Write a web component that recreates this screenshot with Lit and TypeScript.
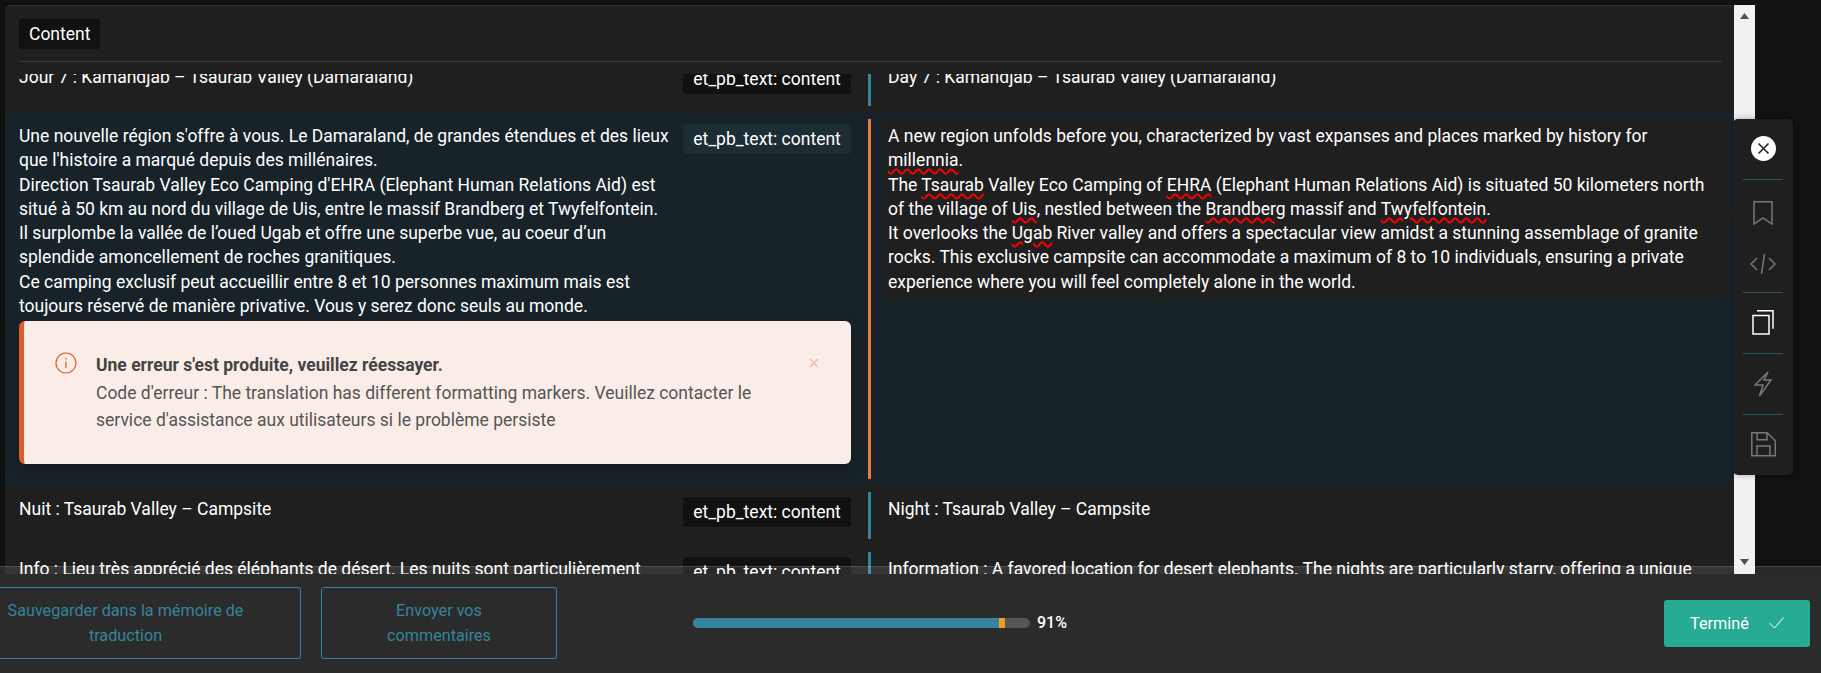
import { LitElement, html, css } from "lit";
import { customElement } from "lit/decorators.js";

const sp = (t: string) => html`<span class="sp">${t}</span>`;

@customElement("app-root")
export class AppRoot extends LitElement {
  static styles = css`
    :host { display: block; width: 1821px; height: 673px; background: #111; overflow: hidden; font-family: Roboto, "Liberation Sans", sans-serif; font-size: 17.5px; color: #fff; }
    .page { display: flex; flex-direction: column; height: 673px; padding-top: 5px; box-sizing: border-box; }
    .main { display: flex; height: 569px; flex: none; padding-left: 5px; position: relative; }
    .panel { width: 1729px; background: #1f1f1f; border-radius: 5px 5px 0 0; border-top: 1px solid #333; box-sizing: border-box; display: flex; flex-direction: column; overflow: hidden; }
    .head { flex: none; height: 56px; margin: 0 12px 0 14px; border-bottom: 1px solid #3a3a3a; padding-top: 13px; box-sizing: border-box; }
    .chip { display: inline-block; height: 30px; line-height: 30px; padding: 0 10px; background: #111; border-radius: 3px; white-space: nowrap; }
    .rows { flex: 1; overflow: hidden; display: flex; flex-direction: column; margin-top: 12px; }
    .row { flex: none; display: flex; padding-left: 14px; }
    .row.clip { height: 61px; margin-top: -22px; }
    .row.active { background: #182329; height: 372px; }
    .row.n { height: 60px; }
    .row.last { height: 60px; }
    .left { width: 832px; flex: none; display: grid; grid-template-columns: 1fr 168px; align-content: start; }
    .src, .tgt { line-height: 24.27px; }
    .src { padding-right: 8px; }
    .bar { width: 3px; flex: none; margin-left: 17px; background: #35849d; margin-top: 7px; height: 47px; }
    .active .bar { background: #ea7a3d; margin-top: 6px; height: 360px; }
    .tgt { margin-left: 17px; }
    .tgtbox { background: #1f1f1f; border-radius: 6px; margin-left: 12px; padding: 6px 14px 0 5px; width: 844px; height: 183px; box-sizing: border-box; margin-top: 5px; line-height: 24.27px; }
    .sp { text-decoration: underline wavy #f00; text-decoration-thickness: 1.5px; text-underline-offset: 2px; }
    .active .left { padding-top: 11px; }
    .active .chip { background: #1c2d34; }
    .clip .chip, .n .chip, .last .chip, .n .src, .n .tgt, .last .src, .last .tgt { margin-top: 12px; }
    .clip .src, .clip .tgt { margin-top: 13px; }
    .last .tgt, .last .src { white-space: nowrap; }
    .chip.tag { padding: 0; width: 168px; text-align: center; }
    .alert { grid-column: 1 / 3; margin-top: 3px; height: 143px; box-sizing: border-box; background: #faede8; border-left: 5px solid #e05a2b; border-radius: 6px; display: flex; padding-top: 31px; position: relative; color: #555; box-shadow: 0 4px 14px rgba(0,0,0,.3); }
    .alert svg.i { margin-left: 31px; flex: none; }
    .alert .txt { margin-left: 19px; width: 670px; line-height: 27px; }
    .alert b { display: block; color: #444; font-weight: 700; line-height: 26px; margin-bottom: 2px; }
    .alert .x { position: absolute; right: 31px; top: 36px; }
    .scroll { width: 21px; flex: none; background: #f1f1f1; display: flex; flex-direction: column; align-items: center; justify-content: space-between; padding: 8px 0 9px; box-sizing: border-box; }
    .tool { position: absolute; left: 1733px; top: 114px; width: 60px; height: 356px; background: #1f1f1f; border-radius: 5px; display: flex; flex-direction: column; align-items: center; box-shadow: 0 0 6px rgba(0,0,0,.3); }
    .tool::before { content: ""; position: absolute; left: -7px; top: 86px; width: 14px; height: 14px; background: #1f1f1f; transform: rotate(45deg) scale(.7); }
    .tool hr { width: 40px; margin: 0; border: 0; border-top: 1px solid #2c5462; flex: none; }
    .tool svg { display: block; flex: none; }
    .foot { flex: none; height: 99px; background: #2b2b2b; display: flex; align-items: flex-start; position: relative; }
    .foot::before { content: ""; position: absolute; left: 0; right: 0; top: -8px; height: 8px; box-sizing: border-box; background: rgba(255,255,255,.1); border-top: 1px solid rgba(255,255,255,.14); }
    .btn { flex: none; margin-top: 13px; height: 72px; box-sizing: border-box; border: 1px solid #35849d; border-radius: 3px; color: #35849d; text-align: center; line-height: 25.5px; display: flex; align-items: center; justify-content: center; font-size: 16.2px; }
    .b1 { width: 351px; margin-left: -50px; padding: 0 50px; }
    .b2 { width: 236px; margin-left: 20px; padding: 0 50px; }
    .prog { margin-left: 136px; margin-top: 44px; width: 337px; height: 10px; border-radius: 5px; background: #555; overflow: hidden; display: flex; flex: none; }
    .p1 { width: 306px; background: #35849d; }
    .p2 { width: 6px; background: #f29b26; }
    .pct { margin-left: 7px; margin-top: 39px; font-weight: 500; font-size: 16px; line-height: 20px; }
    .done { margin-left: auto; margin-right: 11px; margin-top: 26px; width: 146px; height: 47px; padding-left: 26px; box-sizing: border-box; background: #26ab94; border-radius: 3px; display: flex; align-items: center; gap: 20px; font-size: 16.3px; }
    .done svg { margin-top: -2px; }
  `;

  render() {
    const tag = html`<span class="chip tag">et_pb_text: content</span>`;
    return html`<div class="page">
      <div class="main">
        <div class="panel">
          <div class="head"><span class="chip">Content</span></div>
          <div class="rows">
            <div class="row clip">
              <div class="left"><div class="src">Jour 7 : Kamandjab – Tsaurab Valley (Damaraland)</div>${tag}</div>
              <div class="bar"></div><div class="tgt">Day 7 : Kamandjab – Tsaurab Valley (Damaraland)</div>
            </div>
            <div class="row active">
              <div class="left">
                <div class="src">Une nouvelle région s'offre à vous. Le Damaraland, de grandes étendues et des lieux que l'histoire a marqué depuis des millénaires.<br>Direction Tsaurab Valley Eco Camping d'EHRA (Elephant Human Relations Aid) est situé à 50 km au nord du village de Uis, entre le massif Brandberg et Twyfelfontein.<br>Il surplombe la vallée de l’oued Ugab et offre une superbe vue, au coeur d’un splendide amoncellement de roches granitiques.<br>Ce camping exclusif peut accueillir entre 8 et 10 personnes maximum mais est toujours réservé de manière privative. Vous y serez donc seuls au monde.</div>
                ${tag}
                <div class="alert">
                  <svg class="i" width="22" height="22" viewBox="0 0 22 22" fill="none" stroke="#e05a2b" stroke-width="1.2"><circle cx="11" cy="11" r="10"/><path d="M11 9.500v6.500M11 6v1.400"/></svg>
                  <div class="txt"><b>Une erreur s'est produite, veuillez réessayer.</b>Code d'erreur : The translation has different formatting markers. Veuillez contacter le service d'assistance aux utilisateurs si le problème persiste</div>
                  <svg class="x" width="12" height="12" viewBox="0 0 12 12" stroke="#f4b9a3" stroke-width="1.2"><path d="M2 2l8 8M10 2l-8 8"/></svg>
                </div>
              </div>
              <div class="bar"></div>
              <div class="tgtbox">A new region unfolds before you, characterized by vast expanses and places marked by history for ${sp("millennia")}.<br>The ${sp("Tsaurab")} Valley Eco Camping of ${sp("EHRA")} (Elephant Human Relations Aid) is situated 50 kilometers north of the village of ${sp("Uis")}, nestled between the ${sp("Brandberg")} massif and ${sp("Twyfelfontein")}.<br>It overlooks the ${sp("Ugab")} River valley and offers a spectacular view amidst a stunning assemblage of granite rocks. This exclusive campsite can accommodate a maximum of 8 to 10 individuals, ensuring a private experience where you will feel completely alone in the world.</div>
            </div>
            <div class="row n">
              <div class="left"><div class="src">Nuit : Tsaurab Valley – Campsite</div>${tag}</div>
              <div class="bar"></div><div class="tgt">Night : Tsaurab Valley – Campsite</div>
            </div>
            <div class="row last">
              <div class="left"><div class="src">Info : Lieu très apprécié des éléphants de désert. Les nuits sont particulièrement</div>${tag}</div>
              <div class="bar"></div><div class="tgt">Information : A favored location for desert elephants. The nights are particularly starry, offering a unique</div>
            </div>
          </div>
        </div>
        <div class="scroll">
          <svg width="9" height="6" viewBox="0 0 9 6"><path d="M4.500 0L9 6H0z" fill="#505050"/></svg>
          <svg width="9" height="6" viewBox="0 0 9 6"><path d="M0 0h9L4.500 6z" fill="#505050"/></svg>
        </div>
        <div class="tool">
          <svg style="margin-top:17px" width="25" height="25" viewBox="0 0 25 25"><circle cx="12.500" cy="12.500" r="12.500" fill="#fff"/><path d="M7.500 7.500l10 10M17.500 7.500l-10 10" stroke="#222" stroke-width="1.600"/></svg>
          <hr style="margin-top:18px">
          <svg style="margin-top:21px" width="20" height="24" viewBox="0 0 20 24" fill="none" stroke="#787878" stroke-width="1.500"><path d="M1 .8h18V23l-9-6-9 6z"/></svg>
          <svg style="margin-top:29px" width="26" height="20" viewBox="0 0 26 20" fill="none" stroke="#787878" stroke-width="1.500"><path d="M7 4L1 10l6 6M19 4l6 6-6 6M14.500 0l-3 20"/></svg>
          <hr style="margin-top:18px">
          <svg style="margin-top:17px" width="22" height="25" viewBox="0 0 22 25" fill="none" stroke="#fff" stroke-width="1.500"><path d="M5 .8h16v18"/><path d="M1 5.500h16V24H1z"/></svg>
          <hr style="margin-top:18px">
          <svg style="margin-top:17px" width="18" height="26" viewBox="0 0 18 26" fill="none" stroke="#787878" stroke-width="1.500"><path d="M14 1L1 14h8L5.500 25 17 9h-7z"/></svg>
          <hr style="margin-top:17px">
          <svg style="margin-top:17px" width="25" height="25" viewBox="0 0 25 25" fill="none" stroke="#787878" stroke-width="1.500"><path d="M.8 .8h15.500l8 8v15H.8z"/><path d="M6 .8v7h10V.8M6 24V14h13v10"/></svg>
        </div>
      </div>
      <div class="foot">
        <div class="btn b1">Sauvegarder dans la mémoire de traduction</div>
        <div class="btn b2">Envoyer vos commentaires</div>
        <div class="prog"><div class="p1"></div><div class="p2"></div></div>
        <div class="pct">91%</div>
        <div class="done">Terminé <svg width="15" height="12" viewBox="0 0 15 12" fill="none" stroke="#fff" stroke-width="1"><path d="M.5 6l5 5 9-10.500"/></svg></div>
      </div>
    </div>`;
  }
}
